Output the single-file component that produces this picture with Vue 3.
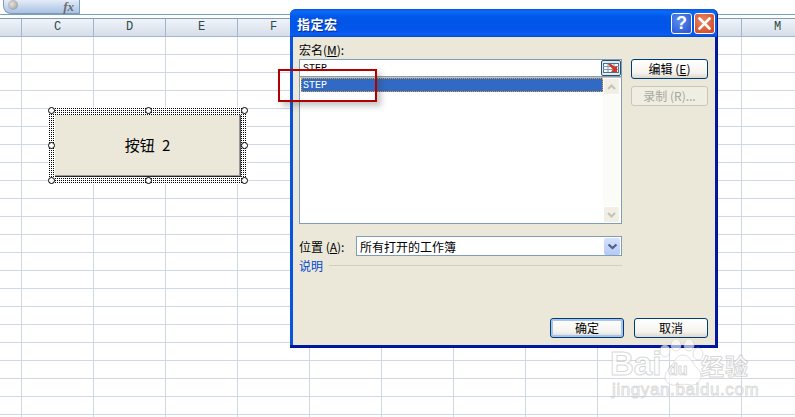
<script setup>
const cols = ['C', 'D', 'E', 'F', 'G', 'H', 'I', 'J', 'K', 'L', 'M']
</script>

<template>
  <div class="page">
    <div class="formula">
      <div class="namebox">
        <span class="orb"></span>
        <span class="fx">fx</span>
      </div>
    </div>
    <div class="headers">
      <div class="corner"></div>
      <div v-for="c in cols" :key="c" class="col">{{ c }}</div>
    </div>
    <div class="sheet"></div>

    <div class="shape">
      <div class="shape-face">按钮 2</div>
      <i class="h h1"></i><i class="h h2"></i><i class="h h3"></i><i class="h h4"></i>
      <i class="h h5"></i><i class="h h6"></i><i class="h h7"></i><i class="h h8"></i>
    </div>

    <div class="dialog">
      <div class="titlebar">
        <span class="title">指定宏</span>
        <span class="tb help">?</span>
        <span class="tb close">
          <svg width="13" height="13" viewBox="0 0 13 13"><path d="M1.500 1.500 11.500 11.500M11.500 1.500 1.500 11.500" stroke="#fff" stroke-width="2.600" stroke-linecap="square"/></svg>
        </span>
      </div>
      <div class="client">
        <div class="upper">
          <div class="main">
            <div class="label">宏名(<u>M</u>):</div>
            <div class="input">
              <span class="val">STEP</span>
              <span class="ref">
                <svg width="18" height="14" viewBox="0 0 18 14">
                  <rect x="1.500" y="2.500" width="15" height="9" fill="#f4f7fb" stroke="#4c6f96"/>
                  <path d="M1 5.500H17M1 8.500H17M6 3V11M12 3V11" stroke="#7d9abb"/>
                  <path d="M6 3 9 3 13 6 15 5 15 11 9 11 11 8.500Z" fill="#d6361c"/>
                </svg>
              </span>
            </div>
            <div class="list">
              <div class="items">
                <div class="item">STEP</div>
              </div>
              <div class="scroll">
                <span class="sbtn">
                  <svg width="9" height="6" viewBox="0 0 9 6"><path d="M1 5 4.500 1.500 8 5" fill="none" stroke="#c5c3b6" stroke-width="2"/></svg>
                </span>
                <span class="sbtn">
                  <svg width="9" height="6" viewBox="0 0 9 6"><path d="M1 1 4.500 4.500 8 1" fill="none" stroke="#c5c3b6" stroke-width="2"/></svg>
                </span>
              </div>
            </div>
          </div>
          <div class="side">
            <button class="btn default">编辑 (<u>E</u>)</button>
            <button class="btn disabled">录制 (R)...</button>
          </div>
        </div>
        <div class="where">
          <span class="where-label">位置 (<u>A</u>):</span>
          <div class="combo">
            <span>所有打开的工作簿</span>
            <span class="drop">
              <svg width="11" height="7" viewBox="0 0 11 7"><path d="M1.500 1.500 5.500 5 9.500 1.500" fill="none" stroke="#4d6185" stroke-width="2.200"/></svg>
            </span>
          </div>
        </div>
        <div class="desc">
          <span>说明</span>
          <i class="rule"></i>
        </div>
        <div class="footer">
          <button class="btn focus">确定</button>
          <button class="btn default">取消</button>
        </div>
      </div>
    </div>

    <div class="redbox"></div>

    <div class="mark">
      <svg class="paw" width="52" height="52" viewBox="0 0 52 52">
        <g fill="#ffffff" fill-opacity=".62" stroke="#c9c9c9" stroke-opacity=".55">
          <ellipse cx="7" cy="11" rx="5" ry="6"/>
          <ellipse cx="18" cy="5" rx="5" ry="6"/>
          <ellipse cx="31" cy="5" rx="5" ry="6"/>
          <ellipse cx="40" cy="14" rx="5" ry="6"/>
          <path d="M25 15C33 15 34 24 40 29 46 35 42 46 33 45 28 44 22 44 17 45 8 46 4 36 10 30 16 24 17 15 25 15Z"/>
        </g>
      </svg>
      <div class="mark-top">
        <span class="bai">Bai</span><span class="du">du</span><span class="jy">经验</span>
      </div>
      <div class="mark-url">jingyan.baidu.com</div>
    </div>
  </div>
</template>

<style>
html, body { margin: 0; background: #fff; overflow: hidden; }
</style>

<style scoped>
.page {
  position: relative;
  width: 795px;
  height: 417px;
  overflow: hidden;
  background: #fff;
  font-family: "Liberation Mono", "Noto Sans CJK SC", monospace;
  font-size: 12px;
  color: #000;
}
.formula {
  height: 14px;
  border-bottom: 1px solid #7b9ebd;
  margin-bottom: 3px;
}
.namebox {
  position: relative;
  height: 14px;
  margin-left: 3px;
  background: linear-gradient(#e4ecf7, #a9c2e3);
  border: solid #7b9ebd;
  border-width: 0 1px 1px 1px;
  border-radius: 0 0 0 8px;
  box-sizing: border-box;
  width: 77px;
}
.orb {
  position: absolute;
  left: 4px;
  top: 0;
  width: 10px;
  height: 10px;
  border-radius: 50%;
  background: radial-gradient(circle at 40% 40%, #e3e3e3, #8d8d8d);
}
.fx {
  position: absolute;
  right: 5px;
  top: 0;
  font: italic bold 13px/13px "Liberation Serif", serif;
  color: #6c6c6c;
}
.headers {
  display: flex;
  height: 19px;
  box-sizing: border-box;
  border-top: 1px solid #7b9ebd;
  border-bottom: 1px solid #9eb6ce;
  background: linear-gradient(#f0f3f9, #d6deea);
}
.corner {
  width: 21px;
  flex: none;
  border-right: 1px solid #9eb6ce;
}
.col {
  width: 71px;
  flex: none;
  border-right: 1px solid #9eb6ce;
  text-align: center;
  line-height: 17px;
  font-size: 12px;
  color: #2d4a4a;
}
.sheet {
  height: 381px;
  background-image:
    linear-gradient(to right, transparent 71px, #d0d7e5 71px),
    linear-gradient(to bottom, transparent 17px, #d0d7e5 17px);
  background-size: 72px 100%, 100% 18px;
  background-position: 22px 0, 0 0;
}
.shape {
  position: absolute;
  left: 48px;
  top: 107px;
  width: 199px;
  height: 77px;
  box-sizing: border-box;
  padding: 8px 6px 7px 7px;
  background:
    repeating-linear-gradient(to right, #fff 0 1px, transparent 1px 2px),
    repeating-linear-gradient(to bottom, #fff 0 1px, #000 1px 2px);
}
.shape-face {
  height: 100%;
  box-sizing: border-box;
  background: #ebe8d9;
  border-right: 1px solid #555;
  border-bottom: 1px solid #222;
  text-align: center;
  font-family: "Noto Sans CJK SC", "Liberation Mono", sans-serif;
  font-size: 15px;
  line-height: 60px;
  word-spacing: 4px;
  box-shadow: inset -1px -1px 0 #999;
}
.h {
  position: absolute;
  width: 7px;
  height: 7px;
  box-sizing: border-box;
  border: 1px solid #000;
  border-radius: 50%;
  background: #fff;
}
.h1 { left: 0; top: 0; }
.h2 { left: 97px; top: 0; }
.h3 { left: 193px; top: 0; }
.h4 { left: 0; top: 35px; }
.h5 { left: 193px; top: 35px; }
.h6 { left: 0; top: 70px; }
.h7 { left: 97px; top: 70px; }
.h8 { left: 193px; top: 70px; }

.dialog {
  position: absolute;
  left: 290px;
  top: 9px;
  width: 428px;
  height: 339px;
  box-sizing: border-box;
  display: flex;
  flex-direction: column;
  background: linear-gradient(to right, #0a52e0 0 3px, transparent 3px), linear-gradient(#0055e5, #0030b0);
  border-radius: 6px 6px 0 0;
  border-right: 1px solid #00138c;
  border-bottom: 1px solid #00138c;
  box-shadow: inset -2px -2px 0 #0019a8;
  padding: 0 2px 2px 3px;
}
.titlebar {
  height: 28px;
  flex: none;
  display: flex;
  align-items: center;
  gap: 2px;
  padding-right: 2px;
  margin: 0 -2px 0 -3px;
  padding-left: 7px;
  border-radius: 6px 6px 0 0;
  background: linear-gradient(#0a58df 0, #0b6afa 3px, #0057e6 8px, #0255ea 20px, #0a5df0 26px, #0346cb 28px);
}
.title {
  flex: 1;
  color: #fff;
  font-family: "Noto Sans CJK SC", sans-serif;
  font-size: 13px;
  font-weight: 700;
  letter-spacing: 0.500px;
  text-shadow: 1px 1px 0 #0a2f9a;
}
.tb {
  width: 21px;
  height: 21px;
  box-sizing: border-box;
  display: flex;
  align-items: center;
  justify-content: center;
  border: 1px solid #fff;
  border-radius: 3px;
  color: #fff;
}
.help {
  background: radial-gradient(circle at 40% 35%, #5d8df0, #2650cf);
  font: bold 18px "Liberation Sans", sans-serif;
}
.close {
  background: radial-gradient(circle at 40% 35%, #ec8461, #d4411c);
}
.client {
  flex: 1;
  display: flex;
  flex-direction: column;
  background: #ebe8d9;
  padding: 0 7px 7px 6px;
  box-sizing: border-box;
  font-family: "Noto Sans CJK SC", "Liberation Mono", sans-serif;
}
.upper {
  display: flex;
  gap: 9px;
}
.main {
  width: 323px;
  flex: none;
}
.label {
  height: 22px;
  line-height: 25px;
  font-size: 12px;
  white-space: nowrap;
}
.input {
  height: 18px;
  box-sizing: border-box;
  border: 1px solid #7f9db9;
  background: #fff;
  display: flex;
  align-items: center;
  justify-content: space-between;
  padding-left: 3px;
}
.val {
  font-family: "Liberation Mono", monospace;
  font-size: 10px;
}
.ref {
  width: 20px;
  height: 16px;
  box-sizing: border-box;
  display: flex;
  align-items: center;
  justify-content: center;
  border: 1px solid #1c5180;
  border-radius: 2px;
  background: #e9e9df;
}
.list {
  height: 147px;
  box-sizing: border-box;
  border: 1px solid #7f9db9;
  border-top: 1px solid #c8c5b6;
  background: #fff;
  display: flex;
  padding-right: 1px;
}
.items {
  flex: 1;
  padding: 0 0 0 1px;
}
.item {
  height: 14px;
  box-sizing: border-box;
  border: 1px dotted #f0a020;
  background: #316ac5;
  color: #fff;
  font-family: "Liberation Mono", monospace;
  font-size: 10px;
  line-height: 14px;
  padding-left: 1px;
}
.scroll {
  width: 17px;
  flex: none;
  display: flex;
  flex-direction: column;
  justify-content: space-between;
  background: #fbfbf7;
}
.sbtn {
  height: 17px;
  box-sizing: border-box;
  display: flex;
  align-items: center;
  justify-content: center;
  background: #f1efe5;
  border: 1px solid #fff;
  border-radius: 2px;
}
.side {
  width: 77px;
  flex: none;
  display: flex;
  flex-direction: column;
  padding-top: 22px;
  gap: 7px;
}
.btn {
  height: 20px;
  width: 77px;
  padding: 0;
  box-sizing: border-box;
  border: 1px solid #003c74;
  border-radius: 3px;
  background: linear-gradient(#fff, #f4f3ee 70%, #dcd8ce);
  font-family: "Noto Sans CJK SC", "Liberation Mono", sans-serif;
  font-size: 12px;
  line-height: 18px;
  color: #000;
}
.disabled {
  border-color: #c9c7ba;
  background: #f0eee3;
  color: #a8a698;
}
.focus {
  width: 74px;
  box-shadow: inset 0 0 0 2px #a9c3ec;
}
.where {
  display: flex;
  align-items: center;
  margin-top: 12px;
  height: 20px;
}
.where-label {
  width: 57px;
  flex: none;
  white-space: nowrap;
}
.combo {
  width: 266px;
  height: 20px;
  box-sizing: border-box;
  border: 1px solid #7f9db9;
  background: #fff;
  display: flex;
  align-items: center;
  justify-content: space-between;
  padding-left: 3px;
  font-size: 12px;
}
.drop {
  width: 16px;
  height: 17px;
  margin-right: 1px;
  display: flex;
  align-items: center;
  justify-content: center;
  border-radius: 2px;
  background: linear-gradient(#d6e2fb, #b5c9f7);
}
.desc {
  display: flex;
  align-items: center;
  gap: 6px;
  width: 323px;
  height: 18px;
  color: #0046d5;
  font-size: 12px;
}
.rule {
  flex: 1;
  height: 1px;
  background: #d0d0bf;
}
.footer {
  margin-top: auto;
  display: flex;
  justify-content: flex-end;
  gap: 10px;
  width: 409px;
}
.footer .btn {
  width: 74px;
}
.redbox {
  position: absolute;
  left: 278px;
  top: 69px;
  width: 99px;
  height: 33px;
  box-sizing: border-box;
  border: 2px solid #b00000;
  box-shadow: 4px 4px 6px rgba(60, 60, 60, 0.3);
}
.mark {
  position: absolute;
  left: 610px;
  top: 340px;
  width: 150px;
  height: 60px;
}
.paw {
  position: absolute;
  left: 48px;
  top: 0;
}
.mark-top {
  position: absolute;
  left: 0;
  top: 6px;
  display: flex;
  align-items: baseline;
  font-family: "Liberation Sans", sans-serif;
  color: rgba(255, 255, 255, 0.75);
  -webkit-text-stroke: 1px rgba(175, 175, 175, 0.5);
}
.bai {
  font-size: 33px;
  font-weight: 700;
  line-height: 36px;
  width: 58px;
}
.du {
  font-size: 16px;
  font-weight: 700;
  width: 33px;
}
.jy {
  font-family: "Noto Sans CJK SC", sans-serif;
  font-size: 23px;
  font-weight: 700;
  letter-spacing: 1px;
}
.mark-url {
  position: absolute;
  left: 2px;
  top: 40px;
  font-family: "Liberation Sans", sans-serif;
  font-size: 17px;
  letter-spacing: 0.600px;
  color: rgba(255, 255, 255, 0.75);
  -webkit-text-stroke: 1px rgba(175, 175, 175, 0.45);
}
</style>
